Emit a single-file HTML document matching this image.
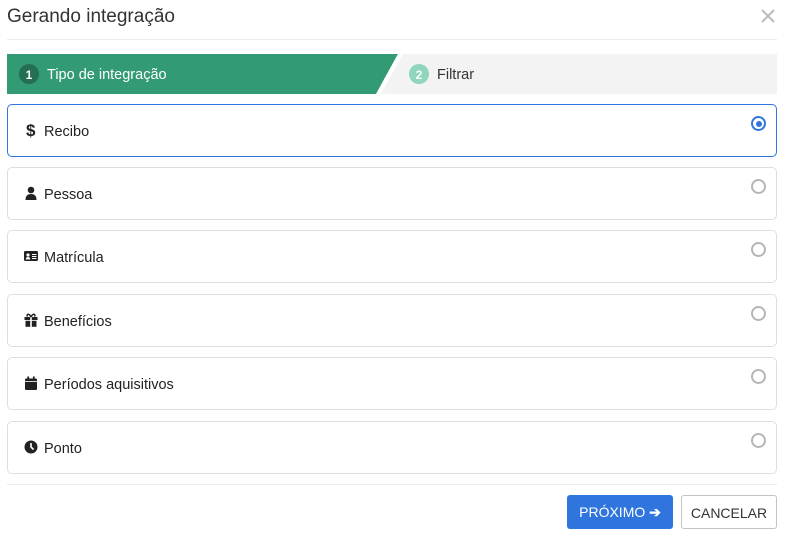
<!DOCTYPE html>
<html><head><style>
body{margin:0;width:787px;height:536px;background:#fff;font-family:"Liberation Sans",sans-serif;color:#222;position:relative;overflow:hidden}
.title{position:absolute;left:7px;top:6px;font-size:19px;color:#333}
.x{position:absolute;left:761px;top:9px}
.hr{position:absolute;left:7px;width:770px;height:1px;background:#ececec}
.card{position:absolute;left:7px;width:768px;height:51px;border:1px solid #dedede;border-radius:5px;box-sizing:content-box}
.card.sel{border-color:#2f75dd}
.lbl{position:absolute;left:36px;top:19px;font-size:14.5px}
.ic{position:absolute;left:16px;top:18px;width:14px;height:14px}
.rad{position:absolute;left:743px;top:11px;width:11px;height:11px;border:2px solid #b5b5b5;border-radius:50%}
.sel .rad{border-color:#2f75dd}
.sel .rad:after{content:"";position:absolute;left:2.5px;top:2.5px;width:6px;height:6px;border-radius:50%;background:#2f75dd}
.btn{position:absolute;top:495px;height:34px;border-radius:3px;font-size:14px;line-height:34px;text-align:center;box-sizing:border-box}
</style></head><body>
<div class="title">Gerando integração</div>
<svg class="x" width="14" height="14" viewBox="0 0 14 14"><path d="M1 1L13 13M13 1L1 13" stroke="#bbb" stroke-width="2"/></svg>
<div class="hr" style="top:39px"></div>
<svg style="position:absolute;left:7px;top:54px" width="770" height="40">
<rect x="0" y="0" width="770" height="40" fill="#f3f3f3"/>
<polygon points="0,0 391,0 369,40 0,40" fill="#339b73"/>
<polygon points="391,0 396,0 374,40 369,40" fill="#fff"/>
<circle cx="22" cy="20" r="10" fill="#246e51"/>
<text x="22" y="25" font-size="12" font-weight="bold" fill="#fff" text-anchor="middle" font-family="Liberation Sans">1</text>
<text x="40" y="25" font-size="14.5" fill="#fff" font-family="Liberation Sans">Tipo de integração</text>
<circle cx="412" cy="20" r="10" fill="#8fd6bc"/>
<text x="412" y="25" font-size="12" font-weight="bold" fill="#fff" text-anchor="middle" font-family="Liberation Sans">2</text>
<text x="430" y="25" font-size="14.5" fill="#333" font-family="Liberation Sans">Filtrar</text>
</svg>

<div class="card sel" style="top:104px"><span class="ic" style="font-weight:bold;font-size:17px;top:16px;left:18px">$</span><span class="lbl">Recibo</span><div class="rad"></div></div>
<div class="card" style="top:167px"><svg class="ic" viewBox="0 0 14 14"><circle cx="7" cy="4" r="3.3" fill="#222"/><path d="M1.5 14Q1.5 8 7 8Q12.5 8 12.5 14Z" fill="#222"/></svg><span class="lbl">Pessoa</span><div class="rad"></div></div>
<div class="card" style="top:230px"><svg class="ic" viewBox="0 0 14 14"><rect x="0" y="2" width="14" height="10" rx="1.5" fill="#222"/><circle cx="4" cy="6" r="1.6" fill="#fff"/><path d="M1.8 10.5Q1.8 8 4 8Q6.2 8 6.2 10.5Z" fill="#fff"/><path d="M8 5.5H12.5M8 7.5H12.5M8 9.5H12.5" stroke="#fff" stroke-width="1"/></svg><span class="lbl">Matrícula</span><div class="rad"></div></div>
<div class="card" style="top:294px"><svg class="ic" viewBox="0 0 14 14"><rect x="0.5" y="4" width="13" height="3" fill="#222"/><rect x="1.5" y="7.8" width="11" height="6" fill="#222"/><rect x="6.2" y="4" width="1.6" height="10" fill="#fff"/><path d="M7 4C5 0 2 1 3.5 3.5M7 4C9 0 12 1 10.5 3.5" stroke="#222" stroke-width="1.5" fill="none"/></svg><span class="lbl">Benefícios</span><div class="rad"></div></div>
<div class="card" style="top:357px"><svg class="ic" viewBox="0 0 14 14"><rect x="1" y="2.5" width="12" height="11.5" rx="1" fill="#222"/><rect x="3.3" y="0.5" width="1.8" height="3" fill="#222"/><rect x="8.9" y="0.5" width="1.8" height="3" fill="#222"/><rect x="1" y="5" width="12" height="0.8" fill="#fff"/></svg><span class="lbl">Períodos aquisitivos</span><div class="rad"></div></div>
<div class="card" style="top:421px"><svg class="ic" viewBox="0 0 14 14"><circle cx="7" cy="7" r="6.5" fill="#222"/><path d="M7 3V7L9.5 9.5" stroke="#fff" stroke-width="1.6" fill="none"/></svg><span class="lbl">Ponto</span><div class="rad"></div></div>

<div class="hr" style="top:484px"></div>
<div class="btn" style="left:567px;width:106px;background:#2f75dd;color:#fff">PRÓXIMO <b>➔</b></div>
<div class="btn" style="left:681px;width:96px;border:1px solid #c4c4c4;color:#333">CANCELAR</div>
</body></html>
